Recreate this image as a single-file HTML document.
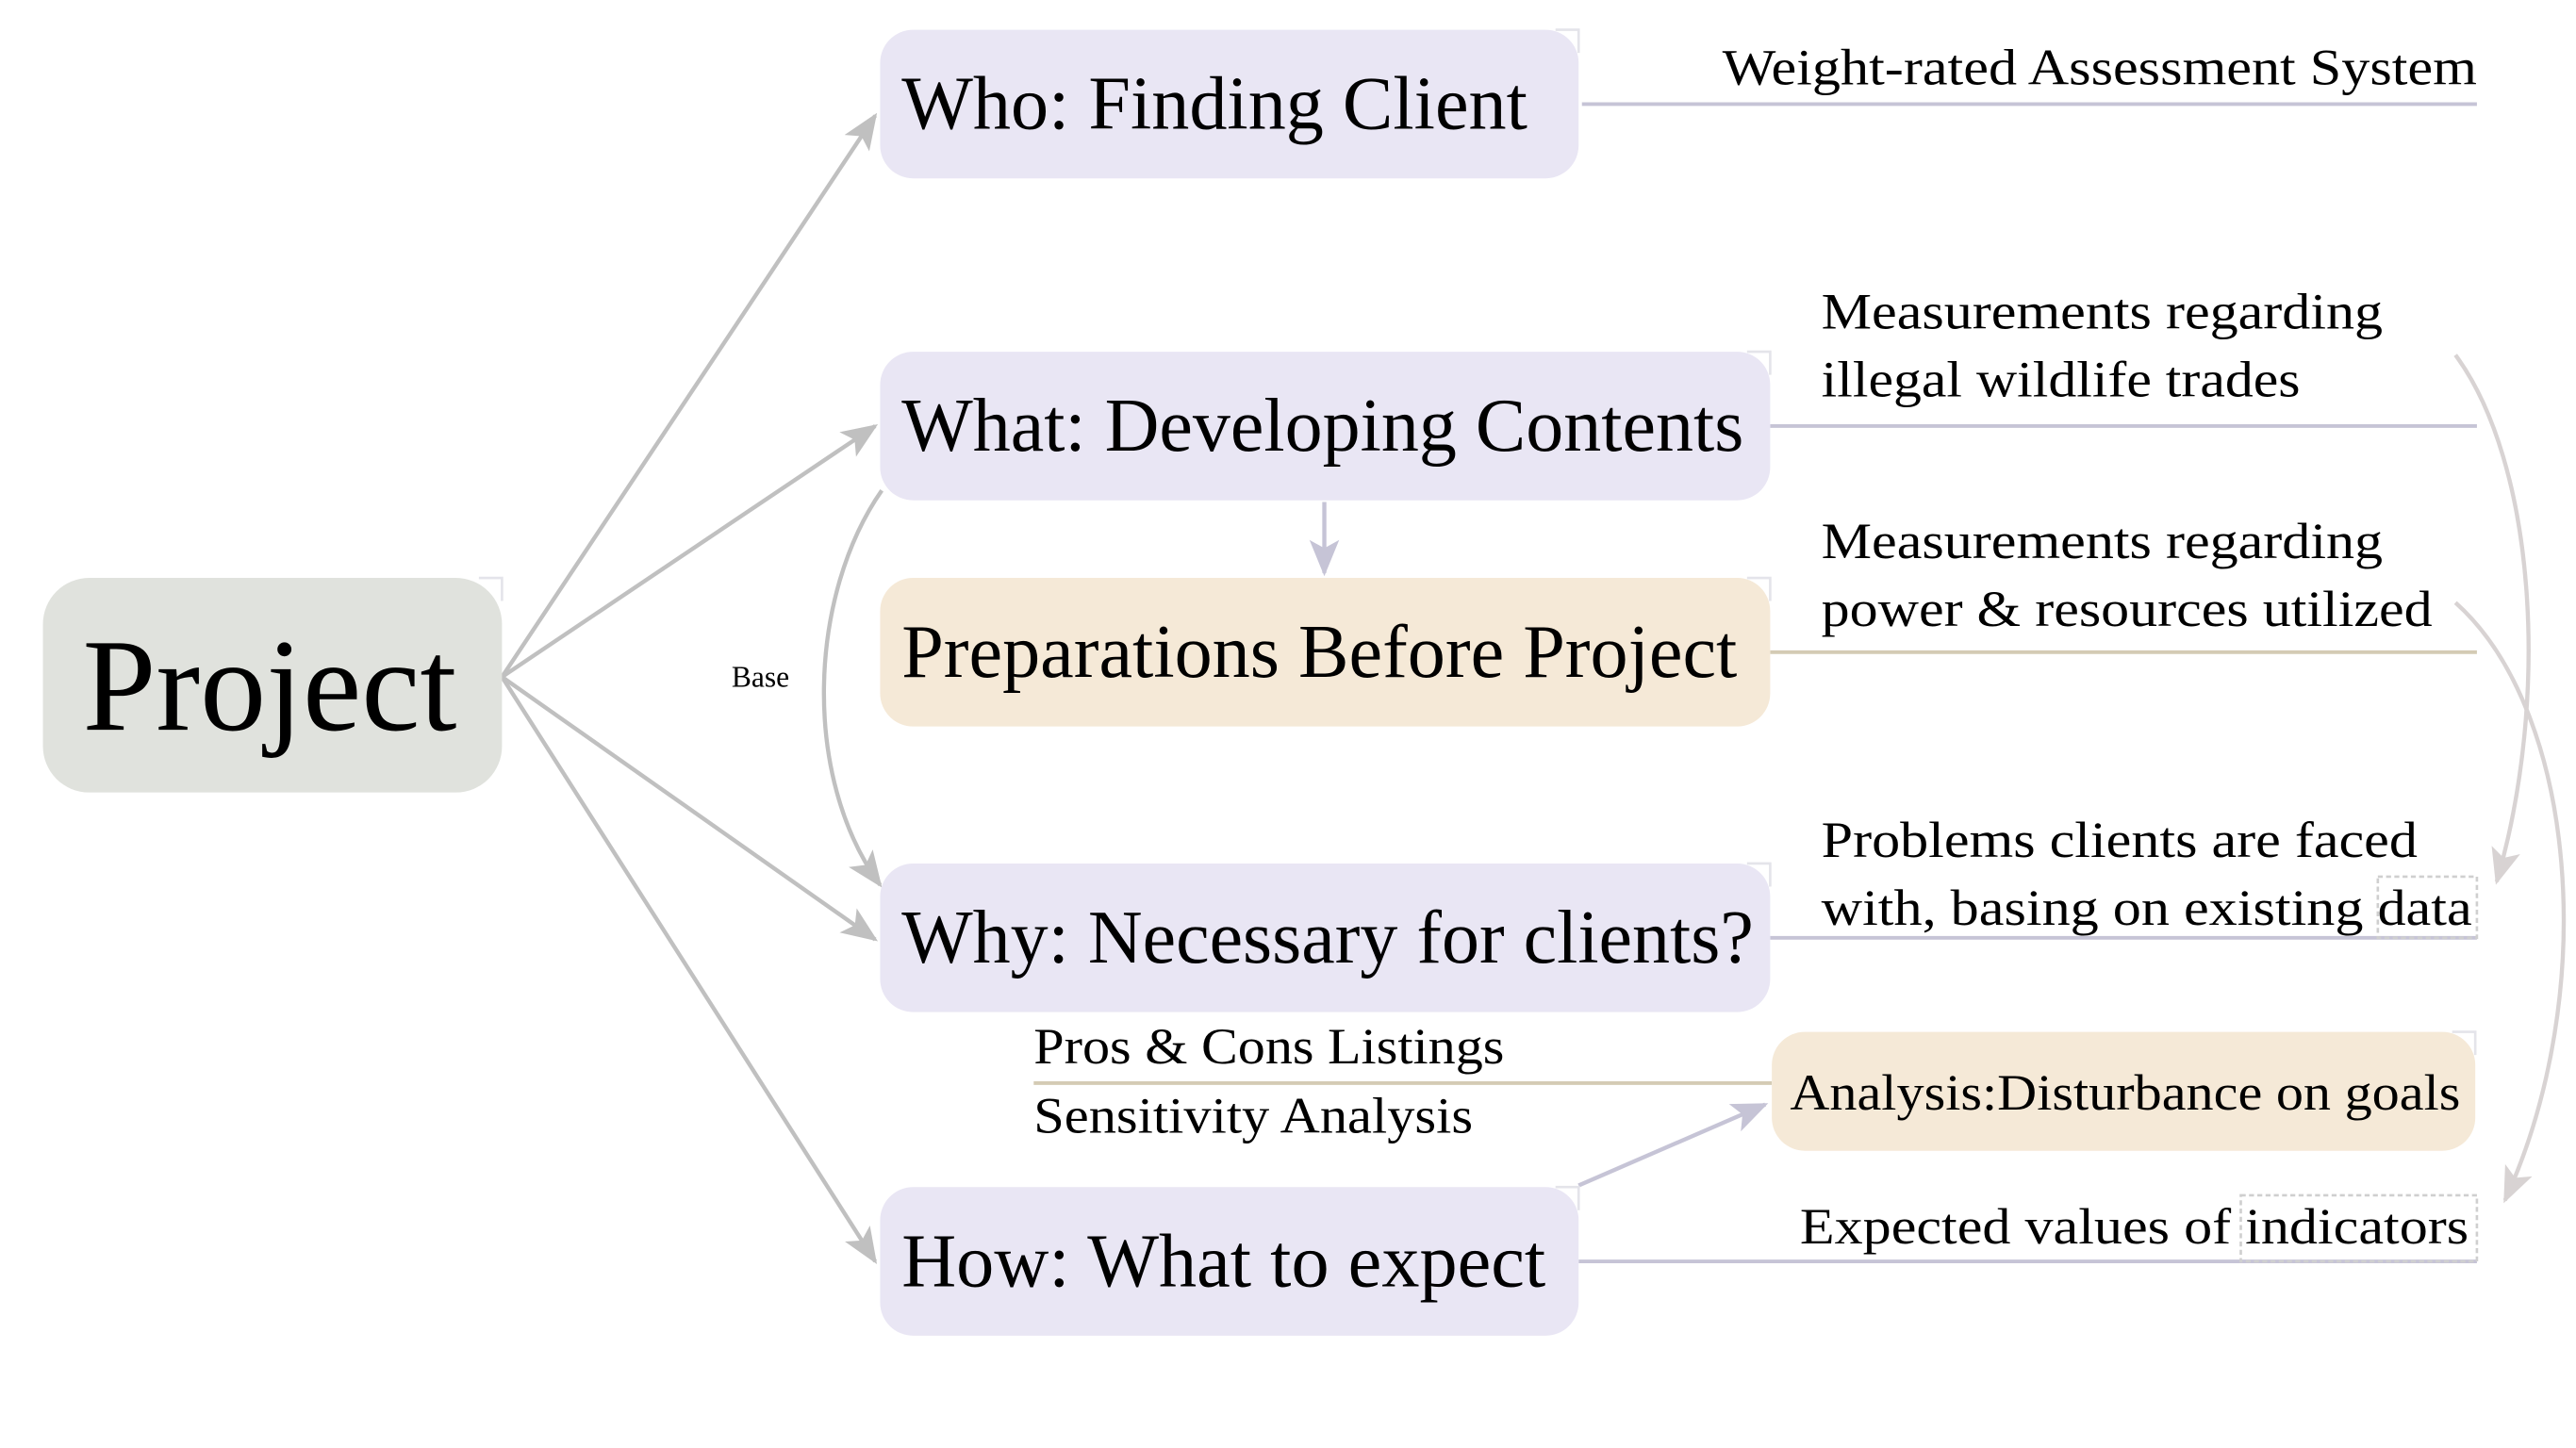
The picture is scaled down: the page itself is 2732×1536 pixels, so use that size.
<!DOCTYPE html>
<html><head><meta charset="utf-8"><style>
html,body{margin:0;padding:0;background:#fff;width:2732px;height:1536px;overflow:hidden}
svg{display:block}
text{font-family:"Liberation Serif",serif;fill:#000}
</style></head><body>
<svg width="2732" height="1536" viewBox="0 0 1560 877" xmlns="http://www.w3.org/2000/svg">
<defs>
<marker id="ag" markerWidth="22" markerHeight="22" refX="20" refY="11" orient="auto" markerUnits="userSpaceOnUse" viewBox="0 0 22 22"><path d="M0,2 L22,11 L0,20 L5,11 Z" fill="#c0c0c0"/></marker>
<marker id="ap" markerWidth="22" markerHeight="22" refX="20" refY="11" orient="auto" markerUnits="userSpaceOnUse" viewBox="0 0 22 22"><path d="M0,2 L22,11 L0,20 L5,11 Z" fill="#c6c4d6"/></marker>
<marker id="ar" markerWidth="22" markerHeight="22" refX="20" refY="11" orient="auto" markerUnits="userSpaceOnUse" viewBox="0 0 22 22"><path d="M0,2 L22,11 L0,20 L5,11 Z" fill="#d8d3d3"/></marker>
</defs>
<g stroke-width="2.2" fill="none">
<line x1="958" y1="63" x2="1500" y2="63" stroke="#c6c4d6"/>
<line x1="1072" y1="258" x2="1500" y2="258" stroke="#c6c4d6"/>
<line x1="1072" y1="395" x2="1500" y2="395" stroke="#d4cbb4"/>
<line x1="1072" y1="568" x2="1500" y2="568" stroke="#c6c4d6"/>
<line x1="956" y1="764" x2="1500" y2="764" stroke="#c6c4d6"/>
<line x1="626" y1="656" x2="1073" y2="656" stroke="#d4cbb4"/>
</g>
<g stroke="#c0c0c0" stroke-width="2.5" fill="none">
<path d="M304,410 L530,70" marker-end="url(#ag)"/>
<path d="M304,410 L530,258" marker-end="url(#ag)"/>
<path d="M304,410 L530,569" marker-end="url(#ag)"/>
<path d="M304,410 L530,764" marker-end="url(#ag)"/>
<path d="M534,297 C490,360 485,470 533,536" marker-end="url(#ag)"/>
</g>
<path d="M802,304 L802,347" stroke="#c6c4d6" stroke-width="2.5" fill="none" marker-end="url(#ap)"/>
<path d="M956,718 L1069,669" stroke="#c6c4d6" stroke-width="2.5" fill="none" marker-end="url(#ap)"/>
<g stroke="#d8d3d3" stroke-width="2.5" fill="none">
<path d="M1487,215 C1535,280 1545,420 1512,534" marker-end="url(#ar)"/>
<path d="M1487,365 C1560,430 1575,600 1517,727" marker-end="url(#ar)"/>
</g>
<rect x="26" y="350" width="278" height="130" rx="28" fill="#e0e2dd"/>
<rect x="533" y="18" width="423" height="90" rx="20" fill="#e9e6f4"/>
<rect x="533" y="213" width="539" height="90" rx="20" fill="#e9e6f4"/>
<rect x="533" y="350" width="539" height="90" rx="20" fill="#f5e9d7"/>
<rect x="533" y="523" width="539" height="90" rx="20" fill="#e9e6f4"/>
<rect x="533" y="719" width="423" height="90" rx="20" fill="#e9e6f4"/>
<rect x="1073" y="625" width="426" height="72" rx="20" fill="#f5e9d7"/>
<g stroke="#e4e4ea" stroke-width="1.5" fill="none">
<path d="M942,18 H956 V32"/><path d="M1058,213 H1072 V227"/><path d="M1058,350 H1072 V364"/>
<path d="M1058,523 H1072 V537"/><path d="M942,719 H956 V733"/><path d="M290,350 H304 V364"/><path d="M1485,625 H1499 V639"/>
</g>
<g stroke="#cfcfcf" stroke-width="1.5" fill="none" stroke-dasharray="3,2">
<rect x="1440" y="531" width="60" height="37"/>
<rect x="1357" y="724" width="143" height="40"/>
</g>
<text x="50" y="442" font-size="80">Project</text>
<text x="546" y="78" font-size="46" textLength="379" lengthAdjust="spacingAndGlyphs">Who: Finding Client</text>
<text x="546" y="273" font-size="46" textLength="510" lengthAdjust="spacingAndGlyphs">What: Developing Contents</text>
<text x="546" y="410" font-size="46" textLength="506" lengthAdjust="spacingAndGlyphs">Preparations Before Project</text>
<text x="546" y="583" font-size="46" textLength="516" lengthAdjust="spacingAndGlyphs">Why: Necessary for clients?</text>
<text x="546" y="779" font-size="46" textLength="390" lengthAdjust="spacingAndGlyphs">How: What to expect</text>
<text x="1084" y="672" font-size="31" textLength="406" lengthAdjust="spacingAndGlyphs">Analysis:Disturbance on goals</text>
<text x="1043" y="51" font-size="31" textLength="457" lengthAdjust="spacingAndGlyphs">Weight-rated Assessment System</text>
<text x="1103" y="199" font-size="31" textLength="340" lengthAdjust="spacingAndGlyphs">Measurements regarding</text>
<text x="1103" y="240" font-size="31" textLength="290" lengthAdjust="spacingAndGlyphs">illegal wildlife trades</text>
<text x="1103" y="338" font-size="31" textLength="340" lengthAdjust="spacingAndGlyphs">Measurements regarding</text>
<text x="1103" y="379" font-size="31" textLength="370" lengthAdjust="spacingAndGlyphs">power &amp; resources utilized</text>
<text x="1103" y="519" font-size="31" textLength="361" lengthAdjust="spacingAndGlyphs">Problems clients are faced</text>
<text x="1103" y="560" font-size="31" textLength="394" lengthAdjust="spacingAndGlyphs">with, basing on existing data</text>
<text x="1090" y="753" font-size="31" textLength="405" lengthAdjust="spacingAndGlyphs">Expected values of indicators</text>
<text x="626" y="644" font-size="31" textLength="285" lengthAdjust="spacingAndGlyphs">Pros &amp; Cons Listings</text>
<text x="626" y="686" font-size="31" textLength="266" lengthAdjust="spacingAndGlyphs">Sensitivity Analysis</text>
<text x="443" y="416" font-size="18">Base</text>
</svg>
</body></html>
